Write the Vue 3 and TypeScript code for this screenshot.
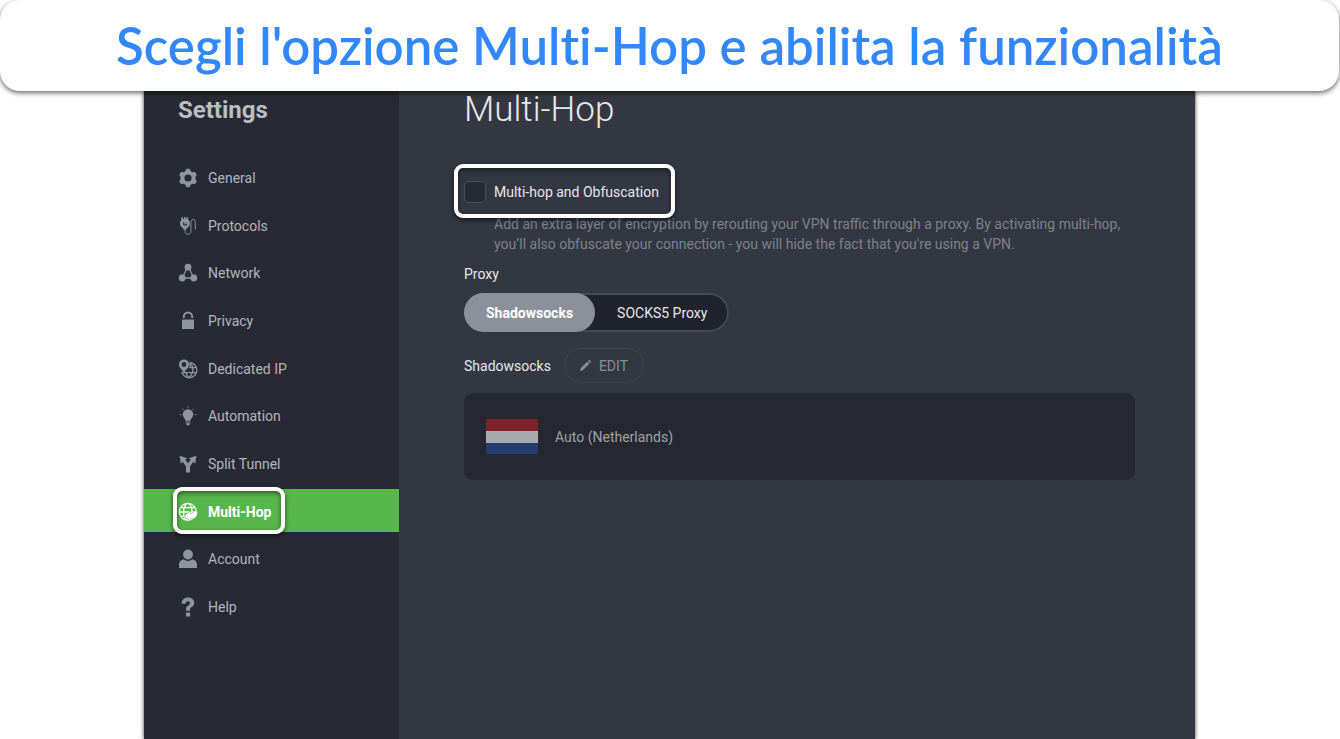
<script setup lang="ts">
import { ref } from 'vue'

type IconName =
  | 'gear' | 'plug' | 'network' | 'lock' | 'dedicated'
  | 'bulb' | 'split' | 'globe' | 'person' | 'help'

interface NavItem {
  label: string
  icon: IconName
}

const items: NavItem[] = [
  { label: 'General', icon: 'gear' },
  { label: 'Protocols', icon: 'plug' },
  { label: 'Network', icon: 'network' },
  { label: 'Privacy', icon: 'lock' },
  { label: 'Dedicated IP', icon: 'dedicated' },
  { label: 'Automation', icon: 'bulb' },
  { label: 'Split Tunnel', icon: 'split' },
  { label: 'Multi-Hop', icon: 'globe' },
  { label: 'Account', icon: 'person' },
  { label: 'Help', icon: 'help' },
]

const active = ref('Multi-Hop')
const enabled = ref(false)
const proxy = ref('Shadowsocks')
const proxies = ['Shadowsocks', 'SOCKS5 Proxy']
</script>

<template>
  <div class="page">
    <header class="banner">
      <h1>Scegli l'opzione Multi-Hop e abilita la funzionalità</h1>
    </header>

    <div class="window">
      <aside class="sidebar">
        <h2>Settings</h2>
        <nav>
          <a
            v-for="item in items"
            :key="item.label"
            href="#"
            class="nav-item"
            :class="{ active: item.label === active }"
            @click.prevent="active = item.label"
          >
            <svg class="icon" viewBox="0 0 20 20" aria-hidden="true">
              <g v-if="item.icon === 'gear'">
                <path
                  fill-rule="evenodd"
                  d="M8.500.8h3l1.200 2.400 1.800 1 2.700-.1 1.600 2.700-1.400 2.200v2l1.400 2.200-1.600 2.700-2.700-.1-1.800 1-1.200 2.400h-3l-1.200-2.400-1.800-1-2.700.1-1.600-2.700L2.600 11V9L1.200 6.800l1.600-2.700 2.700.1 1.800-1zM10 6.400a3.600 3.600 0 1 0 0 7.200 3.600 3.600 0 0 0 0-7.200z"
                />
              </g>
              <g v-else-if="item.icon === 'plug'">
                <path d="M3.500 1H5v2h1V1h1.500v2h1V1H10v2.500h.8v1.700h.9v2.500c0 2.300-1.100 3.800-2.900 4.400v1.300H5.200v-1.300c-1.900-.6-3.200-2.100-3.200-4.400V5.200h1V3.500h.5z" />
                <path d="M5.800 6v3h2.600V7.500" fill="none" class="cut" />
                <path d="M7 13v2.300c0 1.800 1 2.900 2.900 2.900s3-1.100 3-2.900V6.500c0-1.900.8-3 2.200-3s2.200 1.100 2.200 3v7" fill="none" class="line thin" />
              </g>
              <g v-else-if="item.icon === 'network'">
                <circle cx="10" cy="4.200" r="3.400" />
                <circle cx="4.200" cy="15" r="3.400" />
                <circle cx="15.800" cy="15" r="3.400" />
                <path d="M8.500 6 5 13.500M11.500 6l3.500 7.500M5 15h10" fill="none" class="line" />
              </g>
              <g v-else-if="item.icon === 'lock'">
                <path d="M4 8.500h12v9.500H4z" />
                <path d="M5.800 7V5.800a4.200 4.200 0 0 1 8.400 0V7" fill="none" class="line thick" />
              </g>
              <g v-else-if="item.icon === 'dedicated'">
                <g fill="none" class="line">
                  <path d="M12 3.600a7.600 7.600 0 1 1-8.200 9.200" />
                  <path d="M12 3.600c4 4 4 10.500-1 15M8 14c.4 2 1.300 3.600 2.600 4.600M11.300 8.700h6.800M4 13.600h14M12 3.600V8" />
                </g>
                <path
                  fill-rule="evenodd"
                  d="M6 .4a5 5 0 0 0-5 5c0 3.400 3 4.700 5 8.400 2-3.700 5-5 5-8.400a5 5 0 0 0-5-5zm0 2.700a2.400 2.400 0 1 1 0 4.800 2.400 2.400 0 0 1 0-4.800z"
                />
              </g>
              <g v-else-if="item.icon === 'bulb'">
                <path d="M10 3.200a5.300 5.300 0 0 0-5.300 5.300c0 2.900 2.600 3.700 2.800 6.300h5c.2-2.600 2.800-3.400 2.800-6.300A5.300 5.300 0 0 0 10 3.200z" />
                <path d="M7.600 15.500h4.800v1H7.600zM7.600 17.200h4.800l-1.300 2H8.900z" />
                <path d="M10 .3v1.500M4.300 2.700l1.100 1.100M15.700 2.700l-1.100 1.100M1.700 8.500h1.500M16.800 8.500h1.500" fill="none" class="line thin" />
              </g>
              <g v-else-if="item.icon === 'split'">
                <path d="M8 18.500v-6L5 8 2.700 9.400 1.700 1.700l7.500 2.500L7.300 5.700 10 9.300l2.700-3.600-1.900-1.500 7.500-2.500-1 7.700L15 8l-3 4.500v6z" />
              </g>
              <g v-else-if="item.icon === 'globe'">
                <g fill="none" class="line">
                  <circle cx="9.800" cy="9.800" r="8.400" />
                  <ellipse cx="9.800" cy="9.800" rx="4.200" ry="8.400" />
                  <path d="M3 5.700h13.600M1.400 10h17M3 14.200h5" />
                </g>
                <path class="arrow" d="m6 14 6.500-4.800v2.500c1.800 0 3-.8 3.400-2.500h3.400c.4 5-2 7.400-6.800 7.400v2.400z" />
              </g>
              <g v-else-if="item.icon === 'person'">
                <circle cx="10" cy="5.500" r="4.900" />
                <path d="M1 19v-3.300c0-3 2-4.900 4.700-5.400a6.500 6.500 0 0 0 8.600 0C17 10.800 19 12.700 19 15.700V19z" />
              </g>
              <g v-else>
                <path d="M8 13.800v-2.600c0-2.400 4-2.800 4-5 0-2.600-4.200-2.500-4.400.5H3.700C3.700 2.800 6.300.4 9.900.4c3.700 0 6.400 2 6.400 5.400 0 4-4.200 4.200-4.200 6.500v1.500zM8 15.600h4.200v4H8z" />
              </g>
            </svg>
            <span>{{ item.label }}</span>
            <i v-if="item.label === 'Multi-Hop'" class="callout" aria-hidden="true"></i>
          </a>
        </nav>
      </aside>

      <main class="content">
        <h2>Multi-Hop</h2>

        <label class="option">
          <input v-model="enabled" type="checkbox" />
          <span>Multi-hop and Obfuscation</span>
          <i class="callout" aria-hidden="true"></i>
        </label>
        <p class="description">
          Add an extra layer of encryption by rerouting your VPN traffic through a proxy. By
          activating multi-hop, you’ll also obfuscate your connection - you will hide the fact that
          you're using a VPN.
        </p>

        <fieldset>
          <legend>Proxy</legend>
          <div class="segments">
            <label v-for="name in proxies" :key="name" :class="{ selected: proxy === name }">
              <input v-model="proxy" type="radio" name="proxy" :value="name" />
              <span>{{ name }}</span>
            </label>
          </div>
        </fieldset>

        <div class="server-head">
          <h3>Shadowsocks</h3>
          <button type="button">
            <svg viewBox="0 0 12 12" aria-hidden="true">
              <path d="m0 12 .7-3L7.900 1.800l2.300 2.300L3 11.300zM8.600 1.100l.8-.8a1 1 0 0 1 1.300 0l1 1a1 1 0 0 1 0 1.300l-.8.8z" />
            </svg>
            EDIT
          </button>
        </div>

        <div class="server">
          <svg class="flag" viewBox="0 0 52 35" role="img" aria-label="Netherlands">
            <rect width="52" height="12" fill="#7d232c" />
            <rect y="12" width="52" height="12" fill="#a9aaad" />
            <rect y="24" width="52" height="11" fill="#243b6d" />
          </svg>
          <span>Auto (Netherlands)</span>
        </div>
      </main>
    </div>
  </div>
</template>

<style>
body {
  margin: 0;
  background: #fff;
}
</style>

<style scoped>
.page {
  box-sizing: border-box;
  display: flex;
  flex-direction: column;
  min-height: 100vh;
  padding-right: 1px;
  font-family: Roboto, "Liberation Sans", sans-serif;
  font-size: 14px;
  line-height: 20px;
  overflow: hidden;
}

h1,
h2,
h3,
p {
  margin: 0;
}

.banner {
  position: relative;
  z-index: 2;
  display: flex;
  align-items: center;
  justify-content: center;
  box-sizing: border-box;
  min-height: 91px;
  border-radius: 20px;
  background: #fff;
  box-shadow: 0 2px 5px rgba(0, 0, 0, 0.6);
}

.banner h1 {
  color: #3287fa;
  font-family: Lato, "Open Sans", sans-serif;
  font-size: 51px;
  font-weight: 600;
  font-variant-ligatures: none;
  line-height: 60px;
}

.window {
  flex: 1;
  display: grid;
  grid-template-columns: 255px 1fr;
  box-sizing: border-box;
  width: 100%;
  max-width: 1051px;
  margin: 0 auto;
  background: #333742;
  box-shadow: 0 0 4px rgba(0, 0, 0, 0.8);
}

.sidebar {
  background: #272935;
  color: #b4b6bb;
}

.sidebar h2 {
  padding: 5px 34px 0;
  font-size: 24px;
  font-weight: 700;
  line-height: 28px;
  color: #bcbdc1;
}

nav {
  display: flex;
  flex-direction: column;
  justify-content: space-between;
  min-height: 472px;
  margin-top: 31px;
}

.nav-item {
  position: relative;
  display: flex;
  align-items: center;
  gap: 10px;
  box-sizing: border-box;
  height: 43px;
  padding: 3px 0 0 34px;
  color: inherit;
  text-decoration: none;
}

.nav-item.active {
  background: #58b74b;
  color: #fff;
  font-weight: 700;
}

.icon {
  width: 20px;
  height: 20px;
  fill: #8f949f;
  color: #8f949f;
}

.active .icon {
  fill: #fff;
  color: #fff;
}

.line {
  stroke: currentColor;
  stroke-width: 1.3;
}

.thin {
  stroke-width: 1;
}

.thick {
  stroke-width: 2;
}

.cut {
  stroke: #272935;
  stroke-width: 1;
}

.arrow {
  stroke: #272935;
  stroke-width: 1;
  paint-order: stroke;
}

.active .arrow {
  stroke: #58b74b;
}

.callout {
  position: absolute;
  box-sizing: border-box;
  border: 4px solid #fff;
  border-radius: 9px;
  pointer-events: none;
  box-shadow: 0 2px 5px rgba(0, 0, 0, 0.6), inset 0 2px 5px rgba(0, 0, 0, 0.5);
}

.nav-item .callout {
  left: 29px;
  top: -2px;
  width: 112px;
  height: 47px;
}

.content {
  padding: 0 60px 0 65px;
  color: #e6e7e9;
}

.content h2 {
  font-size: 35px;
  font-weight: 300;
  line-height: 38px;
}

.option {
  position: relative;
  display: flex;
  align-items: center;
  gap: 8px;
  width: max-content;
  height: 22px;
  margin-top: 52px;
}

.option input {
  appearance: none;
  box-sizing: border-box;
  width: 22px;
  height: 22px;
  margin: 0;
  border: 1px solid #494c5a;
  border-radius: 5px;
  background: #272935;
}

.option input:checked {
  background: #58b74b;
}

.option .callout {
  left: -10px;
  right: -16px;
  top: -17px;
  bottom: -15px;
}

.description {
  padding: 11px 10px 0 30px;
  color: #7d818c;
}

fieldset {
  min-width: 0;
  margin: 10px 0 0;
  padding: 0;
  border: 0;
}

legend {
  padding: 0;
}

.segments {
  display: inline-flex;
  box-sizing: border-box;
  height: 39px;
  margin-top: 9px;
  border-radius: 20px;
  background: #20232b;
  box-shadow: inset 0 0 0 2px #464954;
}

.segments label {
  position: relative;
  display: flex;
  align-items: center;
  padding: 0 22px;
  border-radius: 20px;
}

.segments .selected {
  background: #8a919a;
  color: #fff;
  font-weight: 700;
}

.segments input {
  position: absolute;
  inset: 0;
  margin: 0;
  opacity: 0;
}

.server-head {
  display: flex;
  align-items: center;
  gap: 13px;
  margin-top: 16px;
}

.server-head h3 {
  font-size: 14px;
  font-weight: 400;
}

.server-head button {
  display: flex;
  align-items: center;
  gap: 8px;
  box-sizing: border-box;
  height: 35px;
  padding: 0 15px;
  border: 1px solid #41444f;
  border-radius: 18px;
  background: transparent;
  color: #898d96;
  font: inherit;
}

.server-head button svg {
  width: 11px;
  height: 11px;
  fill: currentColor;
}

.server {
  display: flex;
  align-items: center;
  gap: 17px;
  min-height: 87px;
  margin-top: 10px;
  padding: 0 22px;
  border-radius: 9px;
  background: #252731;
  color: #a0a2a7;
}

.flag {
  width: 52px;
  height: 35px;
  border-radius: 1px;
}
</style>
